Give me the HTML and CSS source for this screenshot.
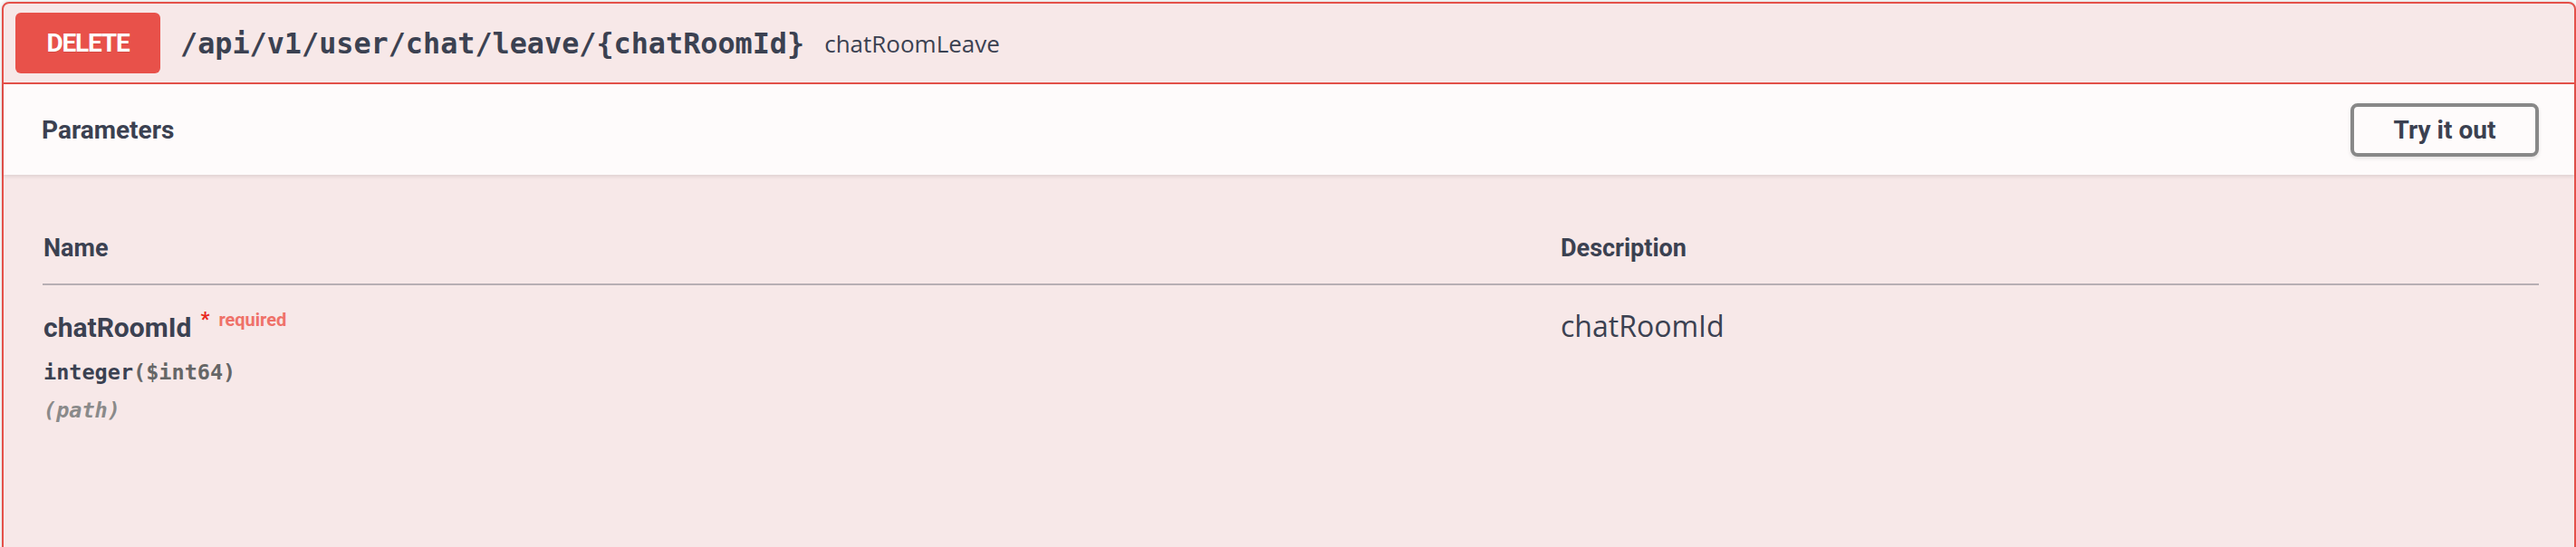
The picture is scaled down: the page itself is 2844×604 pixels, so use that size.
FILE: index.html
```html
<!DOCTYPE html>
<html lang="en">
<head>
<meta charset="utf-8">
<title>DELETE /api/v1/user/chat/leave/{chatRoomId}</title>
<link rel="stylesheet" href="styles.css">
</head>
<body>
<div class="opblock">
  <div class="summary">
    <span class="method">DELETE</span>
    <span class="path">/api/v1/user/chat/leave/{chatRoomId}</span>
    <span class="summary-desc">chatRoomLeave</span>
  </div>
  <div class="section-header">
    <h4 class="section-title">Parameters</h4>
    <button class="try-out" type="button">Try it out</button>
  </div>
  <div class="table-container">
    <div class="params-table">
      <div class="th">Name</div>
      <div class="th">Description</div>
      <div class="cell-name">
        <div class="param-name">chatRoomId<span class="star">*</span><span class="req">required</span></div>
        <div class="param-type">integer<span class="fmt">($int64)</span></div>
        <div class="param-in">(path)</div>
      </div>
      <div class="cell-desc">chatRoomId</div>
    </div>
  </div>
</div>
</body>
</html>
```

FILE: styles.css
```css
html, body {
  margin: 0;
  padding: 0;
  background: #ffffff;
}

body {
  padding: 2px 0 0 2px;
  font-family: "Open Sans", "Noto Sans", sans-serif;
  color: #3b4151;
  overflow: hidden;
}

.opblock {
  box-sizing: border-box;
  width: 2842px;
  min-height: 680px;
  border: 2px solid #e4514a;
  border-radius: 8px;
  background: #f7e8e8;
  box-shadow: 0 0 6px rgba(0, 0, 0, 0.19);
}

.summary {
  display: flex;
  align-items: center;
  padding: 10px 11px 10px 13px;
  border-bottom: 2px solid #e4514a;
}

.method {
  display: flex;
  align-items: center;
  justify-content: center;
  width: 160px;
  height: 67px;
  border-radius: 6px;
  background: #e8514a;
  color: #ffffff;
  font-family: Roboto, "Liberation Sans", sans-serif;
  font-weight: 700;
  font-size: 28px;
  letter-spacing: -1.2px;
  text-shadow: 0 1px 0 rgba(0, 0, 0, 0.1);
}

.path {
  padding: 0 22px 0 22px;
  font-family: "DejaVu Sans Mono", "Liberation Mono", monospace;
  font-weight: 700;
  font-size: 31.8px;
  color: #3b4151;
}

.summary-desc {
  font-family: "Open Sans", sans-serif;
  font-size: 26px;
  color: #3b4151;
}

.section-header {
  display: flex;
  align-items: center;
  justify-content: space-between;
  min-height: 100px;
  padding: 0 39px 0 42px;
  background: rgba(255, 255, 255, 0.8);
  box-shadow: 0 2px 4px rgba(0, 0, 0, 0.1);
}

.section-title {
  margin: 0;
  font-family: Roboto, "Liberation Sans", sans-serif;
  font-weight: 700;
  font-size: 28px;
  color: #3b4151;
}

.try-out {
  box-sizing: border-box;
  width: 208px;
  height: 59px;
  padding: 0;
  border: 4px solid #888888;
  border-radius: 8px;
  background: transparent;
  box-shadow: 0 2px 4px rgba(0, 0, 0, 0.1);
  font-family: Roboto, "Liberation Sans", sans-serif;
  font-weight: 700;
  font-size: 28px;
  color: #3b4151;
}

.table-container {
  padding: 41px 39px 40px 43px;
}

.params-table {
  display: grid;
  grid-template-columns: 1676px 1fr;
  align-items: baseline;
}

.th {
  padding: 24px 0 23px;
  border-bottom: 2px solid #b7afb4;
  font-family: Roboto, "Liberation Sans", sans-serif;
  font-weight: 700;
  font-size: 27px;
  line-height: 32px;
  color: #3b4151;
}

.th:first-child {
  padding-left: 1px;
}

.cell-name {
  padding-top: 20px;
  padding-left: 1px;
}

.param-name {
  font-family: Roboto, "Liberation Sans", sans-serif;
  font-weight: 700;
  font-size: 30px;
  line-height: 36px;
  color: #3b4151;
}

.star {
  padding: 0 10px;
  vertical-align: 12px;
  font-size: 22px;
  color: #e8281f;
}

.req {
  vertical-align: 12px;
  font-family: Roboto, "Liberation Sans", sans-serif;
  font-weight: 700;
  font-size: 20px;
  color: #ef7169;
}

.param-type {
  padding: 17px 0 14px;
  font-family: "DejaVu Sans Mono", "Liberation Mono", monospace;
  font-weight: 700;
  font-size: 23.5px;
  line-height: 28px;
  color: #3b4151;
}

.fmt {
  font-weight: 700;
  color: #666666;
}

.param-in {
  font-family: "DejaVu Sans Mono", "Liberation Mono", monospace;
  font-style: italic;
  font-weight: 700;
  font-size: 23.5px;
  line-height: 28px;
  color: #8a8a8a;
}

.cell-desc {
  padding-top: 20px;
  font-family: "Open Sans", sans-serif;
  font-size: 32px;
  line-height: 36px;
  color: #3b4151;
}
```
